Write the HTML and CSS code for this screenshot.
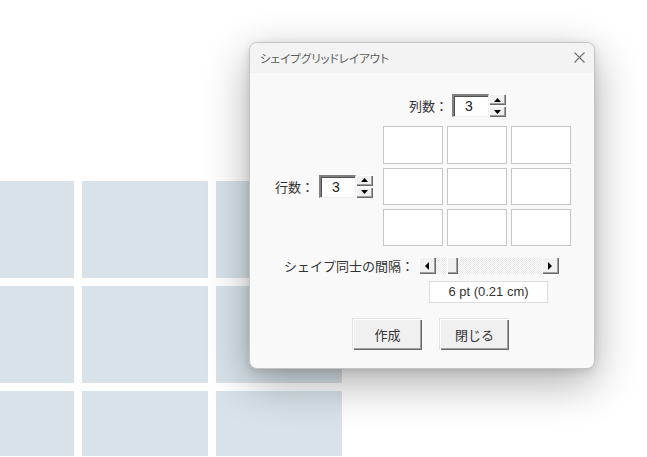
FILE: index.html
```html
<!DOCTYPE html>
<html lang="ja">
<head>
<meta charset="utf-8">
<title>シェイプグリッドレイアウト</title>
<link rel="stylesheet" href="styles.css">
</head>
<body>
<div class="canvas">
  <div class="tile"></div><div class="tile"></div><div class="tile"></div>
  <div class="tile"></div><div class="tile"></div><div class="tile"></div>
  <div class="tile"></div><div class="tile"></div><div class="tile"></div>
</div>

<div class="dialog">
  <div class="titlebar">
    <span class="title">シェイプグリッドレイアウト</span>
    <svg class="close" width="11" height="11" viewBox="0 0 11 11"><path d="M0.5 0.5L10.5 10.5M10.5 0.5L0.5 10.5" stroke="#707070" stroke-width="1.1" fill="none"/></svg>
  </div>
  <div class="body">
    <div class="layout">
      <div class="colspin">
        <span class="label">列数：</span>
        <div class="spinner">
          <div class="field">3</div>
          <div class="spinbtns">
            <div class="spinbtn"><svg width="7" height="4" viewBox="0 0 7 4"><path d="M0 4L3.5 0L7 4Z" fill="#000"/></svg></div>
            <div class="spinbtn"><svg width="7" height="4" viewBox="0 0 7 4"><path d="M0 0L7 0L3.5 4Z" fill="#000"/></svg></div>
          </div>
        </div>
      </div>
      <div class="rowspin">
        <span class="label">行数：</span>
        <div class="spinner">
          <div class="field">3</div>
          <div class="spinbtns">
            <div class="spinbtn"><svg width="7" height="4" viewBox="0 0 7 4"><path d="M0 4L3.5 0L7 4Z" fill="#000"/></svg></div>
            <div class="spinbtn"><svg width="7" height="4" viewBox="0 0 7 4"><path d="M0 0L7 0L3.5 4Z" fill="#000"/></svg></div>
          </div>
        </div>
      </div>
      <div class="preview">
        <div class="cell"></div><div class="cell"></div><div class="cell"></div>
        <div class="cell"></div><div class="cell"></div><div class="cell"></div>
        <div class="cell"></div><div class="cell"></div><div class="cell"></div>
      </div>
    </div>

    <div class="spacing">
      <span class="label">シェイプ同士の間隔：</span>
      <div class="scrollbar">
        <div class="sbtn"><svg width="4" height="8" viewBox="0 0 4 8"><path d="M4 0L0 4L4 8Z" fill="#000"/></svg></div>
        <div class="track"><div class="thumb"></div></div>
        <div class="sbtn"><svg width="4" height="8" viewBox="0 0 4 8"><path d="M0 0L4 4L0 8Z" fill="#000"/></svg></div>
      </div>
    </div>
    <div class="value">6 pt (0.21 cm)</div>

    <div class="actions">
      <div class="btn">作成</div>
      <div class="btn">閉じる</div>
    </div>
  </div>
</div>
</body>
</html>
```
FILE: styles.css
```css
html, body {
  margin: 0;
  padding: 0;
  background: #ffffff;
  width: 647px;
  height: 457px;
  overflow: hidden;
  font-family: "Liberation Sans", "Noto Sans CJK JP", sans-serif;
}

.canvas {
  display: grid;
  grid-template-columns: 126px 126px 126px;
  grid-template-rows: 97px 97px 65px;
  gap: 8px;
  margin-left: -52px;
  padding-top: 181px;
}

.tile {
  background: #d8e2e8;
}

.dialog {
  position: absolute;
  left: 249px;
  top: 42px;
  width: 344px;
  height: 325px;
  border: 1px solid #c4c4c4;
  border-radius: 8px;
  background: #f9f9f9;
  box-shadow: 0 14px 44px rgba(0, 0, 0, 0.32), 0 2px 8px rgba(0, 0, 0, 0.12);
  overflow: hidden;
}

.titlebar {
  height: 30px;
  background: #f3f3f3;
  display: flex;
  align-items: center;
  justify-content: space-between;
  padding: 0 9px 0 10px;
}

.title {
  font-family: "Noto Sans CJK JP", sans-serif;
  font-size: 11.5px;
  font-feature-settings: "palt";
  color: #5c5c5c;
  margin-top: -1px;
}

.close {
  display: block;
  margin-top: -1px;
}

.body {
  color: #333;
  font-size: 13px;
}

.layout {
  display: grid;
  grid-template-columns: 134px 190px;
  grid-template-rows: 23px 121px;
  row-gap: 9px;
  padding-top: 21px;
}

.label {
  font-family: "Noto Sans CJK JP", sans-serif;
  font-size: 13px;
  color: #333;
  line-height: 1;
}

.colspin {
  grid-column: 2;
  grid-row: 1;
  display: flex;
  align-items: center;
  margin-left: 25px;
}

.colspin .label {
  margin-right: 4px;
}

.rowspin {
  grid-column: 1;
  grid-row: 2;
  display: flex;
  align-items: center;
  justify-self: end;
  margin-right: 11px;
  margin-top: -1px;
}

.rowspin .label {
  margin-right: 5px;
}

.spinner {
  display: flex;
  height: 23px;
}

.field {
  width: 37px;
  height: 23px;
  box-sizing: border-box;
  background: #fff;
  border-top: 2px solid #808080;
  border-left: 2px solid #808080;
  border-bottom: 1px solid #f0f0f0;
  border-right: 1px solid #f0f0f0;
  box-shadow: inset 1px 1px 0 #505050;
  font-size: 14px;
  color: #222;
  padding-left: 11px;
  line-height: 20px;
}

.spinbtns {
  display: flex;
  flex-direction: column;
  gap: 1px;
  width: 17px;
}

.spinbtn {
  flex: 1;
  background: #f0f0f0;
  box-shadow: inset 1px 1px 0 #ffffff, inset -1px -1px 0 #696969, inset -2px -2px 0 #a0a0a0;
  display: flex;
  align-items: center;
  justify-content: center;
}

.spinbtn svg {
  display: block;
  margin-left: -1px;
}

.preview {
  grid-column: 2;
  grid-row: 2;
  display: grid;
  grid-template-columns: 60px 60px 60px;
  grid-template-rows: 38px 37px 37px;
  gap: 4px;
  margin-left: -1px;
}

.cell {
  background: #fff;
  border: 1px solid #c6c6c6;
}

.spacing {
  display: flex;
  align-items: center;
  margin-top: 10px;
  padding-left: 34px;
  height: 17px;
}

.spacing .label {
  width: 135px;
}

.scrollbar {
  display: flex;
  width: 140px;
  height: 17px;
}

.sbtn {
  width: 17px;
  height: 17px;
  flex: none;
  background: #f0f0f0;
  box-sizing: border-box;
  box-shadow: inset 1px 1px 0 #ffffff, inset -1px -1px 0 #696969, inset -2px -2px 0 #a0a0a0;
  display: flex;
  align-items: center;
  justify-content: center;
}

.sbtn svg {
  display: block;
  margin-left: -1px;
}

.track {
  flex: 1;
  background-color: #ffffff;
  background-image: conic-gradient(#e6e6e6 25%, #ffffff 0 50%, #e6e6e6 0 75%, #ffffff 0);
  background-size: 2px 2px;
  display: flex;
}

.thumb {
  width: 11px;
  height: 17px;
  margin-left: 11px;
  background: #f0f0f0;
  box-shadow: inset 1px 1px 0 #ffffff, inset -1px -1px 0 #696969, inset -2px -2px 0 #a0a0a0;
}

.value {
  width: 119px;
  height: 22px;
  box-sizing: border-box;
  margin-top: 7px;
  margin-left: 179px;
  background: #fff;
  border: 1px solid #dcdcdc;
  font-size: 13px;
  color: #333;
  text-align: center;
  line-height: 20px;
}

.actions {
  display: flex;
  gap: 17px;
  margin-top: 15px;
  margin-left: 102px;
}

.btn {
  width: 70px;
  height: 32px;
  box-sizing: border-box;
  background: #f0f0f0;
  box-shadow: inset 1px 1px 0 #ffffff, inset -1px -1px 0 #696969, inset -2px -2px 0 #a0a0a0;
  border: 1px solid #e3e3e3;
  border-right: none;
  border-bottom: none;
  font-family: "Noto Sans CJK JP", sans-serif;
  font-size: 13px;
  color: #333;
  display: flex;
  align-items: center;
  justify-content: center;
  padding-bottom: 1px;
}
```
